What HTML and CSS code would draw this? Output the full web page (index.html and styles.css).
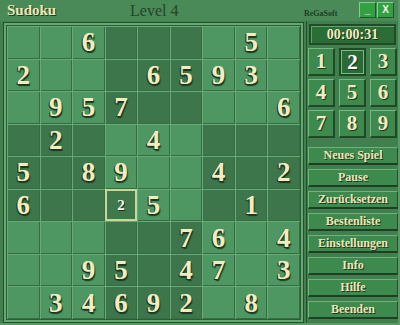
FILE: index.html
```html
<!DOCTYPE html>
<html>
<head>
<meta charset="utf-8">
<link rel="stylesheet" href="styles.css">
</head>
<body>
<div class="window">
  <div class="titlebar">
    <span class="app-title">Sudoku</span>
    <span class="level">Level 4</span>
    <span class="brand">ReGaSoft</span>
    <div class="win-btns">
      <span class="win-btn">_</span>
      <span class="win-btn">X</span>
    </div>
  </div>
  <div class="main">
    <div class="board-frame">
      <div class="board">
        <div class="cell l"></div><div class="cell l"></div><div class="cell l">6</div><div class="cell d"></div><div class="cell d"></div><div class="cell d"></div><div class="cell l"></div><div class="cell l">5</div><div class="cell l"></div>
        <div class="cell l">2</div><div class="cell l"></div><div class="cell l"></div><div class="cell d"></div><div class="cell d">6</div><div class="cell d">5</div><div class="cell l">9</div><div class="cell l">3</div><div class="cell l"></div>
        <div class="cell l"></div><div class="cell l">9</div><div class="cell l">5</div><div class="cell d">7</div><div class="cell d"></div><div class="cell d"></div><div class="cell l"></div><div class="cell l"></div><div class="cell l">6</div>
        <div class="cell d"></div><div class="cell d">2</div><div class="cell d"></div><div class="cell l"></div><div class="cell l">4</div><div class="cell l"></div><div class="cell d"></div><div class="cell d"></div><div class="cell d"></div>
        <div class="cell d">5</div><div class="cell d"></div><div class="cell d">8</div><div class="cell l">9</div><div class="cell l"></div><div class="cell l"></div><div class="cell d">4</div><div class="cell d"></div><div class="cell d">2</div>
        <div class="cell d">6</div><div class="cell d"></div><div class="cell d"></div><div class="cell l sel"><span class="pencil">2</span></div><div class="cell l">5</div><div class="cell l"></div><div class="cell d"></div><div class="cell d">1</div><div class="cell d"></div>
        <div class="cell l"></div><div class="cell l"></div><div class="cell l"></div><div class="cell d"></div><div class="cell d"></div><div class="cell d">7</div><div class="cell l">6</div><div class="cell l"></div><div class="cell l">4</div>
        <div class="cell l"></div><div class="cell l"></div><div class="cell l">9</div><div class="cell d">5</div><div class="cell d"></div><div class="cell d">4</div><div class="cell l">7</div><div class="cell l"></div><div class="cell l">3</div>
        <div class="cell l"></div><div class="cell l">3</div><div class="cell l">4</div><div class="cell d">6</div><div class="cell d">9</div><div class="cell d">2</div><div class="cell l"></div><div class="cell l">8</div><div class="cell l"></div>
      </div>
    </div>
    <div class="panel">
      <div class="timer">00:00:31</div>
      <div class="numpad">
        <span class="key">1</span><span class="key active">2</span><span class="key">3</span>
        <span class="key">4</span><span class="key">5</span><span class="key">6</span>
        <span class="key">7</span><span class="key">8</span><span class="key">9</span>
      </div>
      <div class="menu">
        <span class="mbtn">Neues Spiel</span>
        <span class="mbtn">Pause</span>
        <span class="mbtn">Zurücksetzen</span>
        <span class="mbtn">Bestenliste</span>
        <span class="mbtn">Einstellungen</span>
        <span class="mbtn">Info</span>
        <span class="mbtn">Hilfe</span>
        <span class="mbtn">Beenden</span>
      </div>
    </div>
  </div>
</div>
</body>
</html>
```
FILE: styles.css
```css
html, body {
  margin: 0;
  padding: 0;
}
body {
  width: 400px;
  height: 325px;
  overflow: hidden;
  background: #3f7d4c;
  font-family: "Liberation Serif", "Times New Roman", serif;
}
.window {
  width: 400px;
  height: 325px;
  box-sizing: border-box;
  display: flex;
  flex-direction: column;
  background: #417f4f;
  border-right: 2px solid #5a9a66;
  border-bottom: 2px solid #5a9a66;
}
.titlebar {
  height: 22px;
  display: flex;
  align-items: center;
  position: relative;
  background: #4a8a58;
  box-sizing: border-box;
  padding-left: 7px;
}
.app-title {
  font-weight: bold;
  font-size: 15px;
  color: #ece6b6;
  text-shadow: 1px 1px 0 #1d3a22;
  width: 123px;
}
.level {
  font-size: 16px;
  color: #234528;
  width: 174px;
}
.brand {
  font-size: 8px;
  font-weight: bold;
  color: #1f3d24;
  margin-top: 6px;
}
.win-btns {
  display: flex;
  gap: 1px;
  margin-left: auto;
  margin-right: 4px;
  margin-top: -2px;
}
.win-btn {
  width: 17px;
  height: 16px;
  box-sizing: border-box;
  background: #33a044;
  border-top: 1px solid #7fd08a;
  border-left: 1px solid #7fd08a;
  border-right: 1px solid #1d5a25;
  border-bottom: 1px solid #1d5a25;
  color: #f4f4e0;
  font-family: "Liberation Sans", Arial, sans-serif;
  font-size: 10px;
  font-weight: bold;
  display: flex;
  align-items: center;
  justify-content: center;
}
.main {
  display: flex;
  flex: 1;
}
.board-frame {
  margin-left: 3px;
  margin-top: 1px;
  border: 1px solid #24502c;
  box-shadow: inset 0 0 0 2px #66a873;
  padding: 3px;
  background: #2c5e36;
  width: 293px;
  height: 293px;
}
.board {
  display: grid;
  grid-template-columns: repeat(9, 1fr);
  grid-template-rows: repeat(9, 1fr);
  width: 293px;
  height: 293px;
  background: #2d6139;
}
.cell {
  display: flex;
  align-items: center;
  justify-content: center;
  font-weight: bold;
  font-size: 27px;
  color: #f2edc0;
  text-shadow: -1px 1px 0 #1b3520, 1px 2px 1px #1b3520;
  box-shadow: inset 1px 1px 0 #68aa77, inset -1px -1px 0 #356d42;
  padding-top: 1px;
  box-sizing: border-box;
}
.cell.l {
  background: #4e9662;
}
.cell.d {
  background: #3d764b;
}
.cell.sel {
  box-shadow: inset 0 0 0 2px #c9d69a;
  background: #3e784b;
}
.pencil {
  font-size: 15px;
  color: #f6f6ee;
  text-shadow: 1px 1px 0 #1b3520;
}
.panel {
  margin-left: 2px;
  border-left: 1px solid #24502c;
  padding-left: 1px;
  width: 90px;
  display: flex;
  flex-direction: column;
  padding-top: 3px;
}
.timer {
  height: 21px;
  margin-left: 1px;
  width: 87px;
  box-sizing: border-box;
  background: #2c6c37;
  border: 2px solid #1f4c26;
  box-shadow: inset 1px 1px 0 #5da46a;
  color: #f2edc0;
  font-weight: bold;
  font-size: 14px;
  display: flex;
  align-items: center;
  justify-content: center;
  text-shadow: 1px 1px 0 #15301a;
}
.numpad {
  display: grid;
  grid-template-columns: repeat(3, 27px);
  grid-auto-rows: 28px;
  column-gap: 4px;
  row-gap: 3px;
  margin-top: 3px;
}
.key {
  box-sizing: border-box;
  background: #3e8a4e;
  border-top: 1px solid #75b882;
  border-left: 1px solid #75b882;
  border-right: 2px solid #1f4a26;
  border-bottom: 2px solid #1f4a26;
  color: #f2edc0;
  font-weight: bold;
  font-size: 21px;
  display: flex;
  align-items: center;
  justify-content: center;
  text-shadow: 1px 1px 0 #1b3520;
}
.key.active {
  background: #2b6a36;
  border: 2px solid #1f4a26;
  box-shadow: inset 0 0 0 1px #79bb85;
  color: #ffffff;
}
.menu {
  display: flex;
  flex-direction: column;
  gap: 4px;
  margin-top: 9px;
}
.mbtn {
  height: 18px;
  width: 90px;
  box-sizing: border-box;
  background: #3e8a4e;
  border-top: 1px solid #6fb27c;
  border-left: 1px solid #6fb27c;
  border-right: 1px solid #24502c;
  border-bottom: 2px solid #1e3f22;
  color: #ece6b6;
  font-weight: bold;
  font-size: 12px;
  display: flex;
  align-items: center;
  justify-content: center;
  text-shadow: 1px 1px 0 #1b3520;
}
```
